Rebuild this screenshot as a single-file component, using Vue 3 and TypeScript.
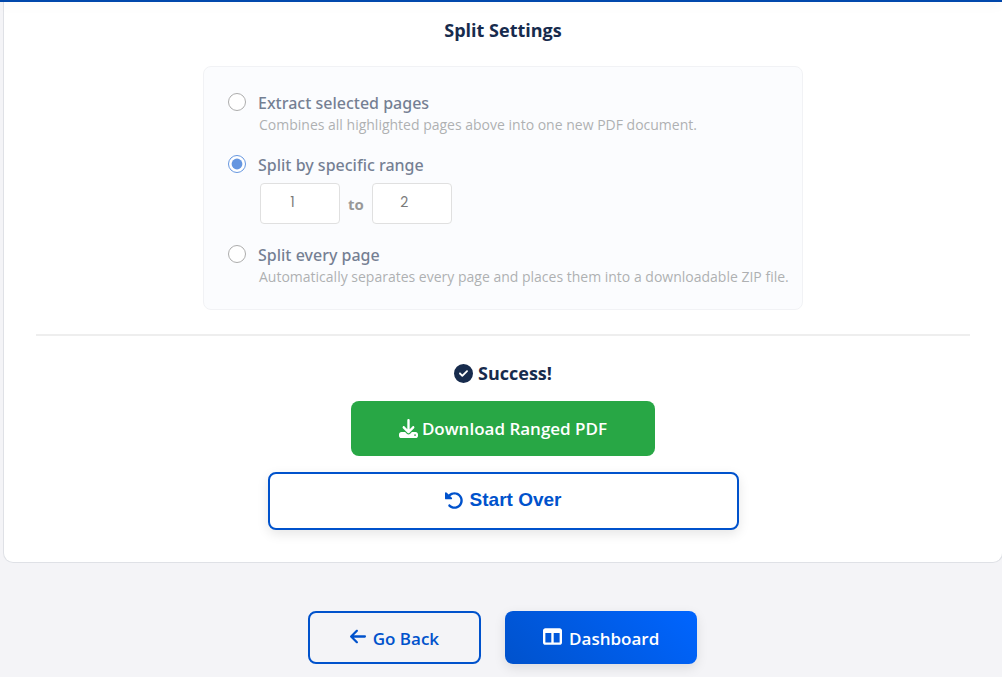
<script setup lang="ts">
import { ref } from 'vue'

type SplitMode = 'extract' | 'range' | 'every'

const mode = ref<SplitMode>('range')
const from = ref(1)
const to = ref(2)
</script>

<template>
  <div class="page">
    <header class="topbar"></header>
    <main class="card">
      <h3 class="title">Split Settings</h3>
      <form class="panel" @submit.prevent>
        <div class="option">
          <input id="mode-extract" v-model="mode" type="radio" name="mode" value="extract" />
          <div class="option-body">
            <label for="mode-extract">Extract selected pages</label>
            <p class="desc">Combines all highlighted pages above into one new PDF document.</p>
          </div>
        </div>
        <div class="option">
          <input id="mode-range" v-model="mode" type="radio" name="mode" value="range" />
          <div class="option-body">
            <label for="mode-range">Split by specific range</label>
            <div class="range">
              <input v-model="from" type="number" min="1" aria-label="From page" />
              <span class="to">to</span>
              <input v-model="to" type="number" min="1" aria-label="To page" />
            </div>
          </div>
        </div>
        <div class="option">
          <input id="mode-every" v-model="mode" type="radio" name="mode" value="every" />
          <div class="option-body">
            <label for="mode-every">Split every page</label>
            <p class="desc">Automatically separates every page and places them into a downloadable ZIP file.</p>
          </div>
        </div>
      </form>
      <section class="result">
        <h3 class="success">
          <svg class="icon" viewBox="0 0 512 512" aria-hidden="true"><path d="M256 512A256 256 0 1 0 256 0a256 256 0 1 0 0 512zM369 209L241 337c-9.4 9.4-24.6 9.4-33.9 0l-64-64c-9.4-9.4-9.4-24.6 0-33.9s24.6-9.4 33.9 0l47 47L335 175c9.4-9.4 24.6-9.4 33.9 0s9.4 24.6 0 33.9z" /></svg>
          Success!
        </h3>
        <a class="download" href="#">
          <svg class="icon" viewBox="0 0 512 512" aria-hidden="true"><path d="M288 32c0-17.7-14.3-32-32-32s-32 14.3-32 32V274.7l-73.4-73.4c-12.5-12.5-32.8-12.5-45.3 0s-12.5 32.8 0 45.3l128 128c12.5 12.5 32.8 12.5 45.3 0l128-128c12.5-12.5 12.5-32.8 0-45.3s-32.8-12.5-45.3 0L288 274.7V32zM64 352c-35.3 0-64 28.7-64 64v32c0 35.3 28.7 64 64 64H448c35.3 0 64-28.7 64-64V416c0-35.3-28.7-64-64-64H346.5l-45.3 45.3c-25 25-65.5 25-90.5 0L165.5 352H64zm368 56a24 24 0 1 1 0 48 24 24 0 1 1 0-48z" /></svg>
          Download Ranged PDF
        </a>
        <button class="restart" type="button">
          <svg class="icon" viewBox="0 0 512 512" aria-hidden="true"><path d="M24 32C10.700 32 0 42.700 0 56V200c0 13.300 10.700 24 24 24H168c9.700 0 18.500-5.800 22.200-14.800s1.700-19.300-5.200-26.200l-42-41c62.600-61.500 163.100-61.200 225.300 1c62.500 62.500 62.500 163.800 0 226.300s-163.800 62.500-226.300 0c-12.500-12.500-32.800-12.500-45.300 0s-12.500 32.800 0 45.300c87.500 87.500 229.300 87.500 316.800 0s87.500-229.300 0-316.800C326.400 10.700 185.300 10.300 97.600 96.800L48 47C41 38 34 32 24 32z" /></svg>
          Start Over
        </button>
      </section>
    </main>
    <nav class="links">
      <a class="link back" href="#">
        <svg class="icon arrow" viewBox="0 0 448 512" aria-hidden="true"><path d="M9.4 233.4c-12.5 12.5-12.5 32.8 0 45.3l160 160c12.5 12.5 32.8 12.5 45.3 0s12.5-32.8 0-45.3L109.2 288 416 288c17.7 0 32-14.3 32-32s-14.3-32-32-32l-306.7 0L214.6 118.6c12.5-12.5 12.5-32.8 0-45.3s-32.8-12.5-45.3 0l-160 160z" /></svg>
        <span>Go Back</span>
      </a>
      <a class="link dashboard" href="#">
        <svg class="icon" viewBox="0 0 512 512" aria-hidden="true"><path d="M0 96C0 60.7 28.7 32 64 32H448c35.3 0 64 28.7 64 64V416c0 35.3-28.7 64-64 64H64c-35.3 0-64-28.7-64-64V96zm64 64V416H224V160H64zm384 0H288V416H448V160z" /></svg>
        <span>Dashboard</span>
      </a>
    </nav>
  </div>
</template>

<style>
body {
  margin: 0;
  background: #f4f4f7;
}
</style>

<style scoped>
* {
  box-sizing: border-box;
}

.page {
  min-height: 100vh;
  overflow: hidden;
  font-family: 'Segoe UI', 'Open Sans', sans-serif;
  color: #172b4d;
  background: #f4f4f7;
}

.topbar {
  position: relative;
  height: 2px;
  background: #0047ab;
  box-shadow: 0 2px 12px rgba(0, 0, 0, 0.1);
}

.card {
  display: flex;
  flex-direction: column;
  align-items: center;
  margin: 0 -1px 0 3px;
  padding: 16px 32px 32px;
  background: #fff;
  border: 1px solid #dfe1e6;
  border-top: 0;
  border-radius: 0 0 10px 10px;
}

.title,
.success {
  margin: 0;
  font-size: 18px;
  font-weight: 700;
  line-height: 24px;
}

.panel {
  display: flex;
  flex-direction: column;
  gap: 19px;
  width: 600px;
  max-width: 100%;
  margin-top: 24px;
  padding: 24px 8px 23px 24px;
  background: #f9fbfe;
  border: 1px solid #e9ebef;
  border-radius: 8px;
  opacity: 0.6;
}

.option {
  display: flex;
  gap: 12px;
}

.option > input {
  flex: none;
  width: 18px;
  height: 18px;
  margin: 2px 0 0;
  accent-color: #0052cc;
}

.option-body label {
  display: block;
  font-family: 'Segoe UI', 'Noto Sans', sans-serif;
  font-size: 16px;
  font-weight: 500;
  line-height: 24px;
}

.desc {
  margin: 0;
  padding-left: 1px;
  color: #7a7d80;
  font-size: 14px;
  line-height: 19px;
}

.range {
  display: flex;
  align-items: center;
  gap: 8px;
  padding: 6px 0 0 2px;
}

.range input {
  width: 80px;
  height: 41px;
  padding: 7px 8px 9px;
  color: #222;
  font-family: Poppins, Lato, sans-serif;
  font-size: 14px;
  text-align: center;
  background: #fff;
  border: 1px solid #ccc;
  border-radius: 4px;
}

.to {
  color: #555;
  font-size: 15px;
  font-weight: 700;
}

.result {
  display: flex;
  flex-direction: column;
  align-items: center;
  align-self: stretch;
  margin-top: 24px;
  padding-top: 25px;
  border-top: 2px solid #eee;
}

.icon {
  flex: none;
  width: 19px;
  height: 19px;
  fill: currentColor;
}

.success {
  display: flex;
  align-items: center;
  gap: 5px;
}

.download {
  display: flex;
  align-items: center;
  gap: 4px;
  margin-top: 16px;
  padding: 0 48px;
  color: #fff;
  font-size: 17px;
  font-weight: 600;
  line-height: 55px;
  text-decoration: none;
  background: #28a745;
  border-radius: 8px;
}

.restart {
  display: flex;
  align-items: center;
  justify-content: center;
  gap: 6px;
  width: calc(50% + 4px);
  height: 58px;
  margin-top: 16px;
  padding: 0 0 2px;
  color: #0052cc;
  font-family: 'Liberation Sans', Arial, sans-serif;
  font-size: 19px;
  font-weight: 700;
  background: #fff;
  border: 2px solid #0052cc;
  border-radius: 8px;
  box-shadow: 0 4px 12px rgba(0, 0, 0, 0.1);
}

.links {
  display: flex;
  justify-content: center;
  gap: 24px;
  margin-left: 3px;
  padding: 48px 0 12px;
}

.link {
  display: flex;
  align-items: center;
  gap: 7px;
  height: 53px;
  padding: 2px 40px 0;
  font-size: 17px;
  font-weight: 600;
  text-decoration: none;
  border-radius: 8px;
}

.link .icon {
  margin-bottom: 4px;
}

.back {
  color: #0052cc;
  border: 2px solid #0052cc;
}

.link .arrow {
  width: 16px;
}

.dashboard {
  padding: 2px 38px 0;
  color: #fff;
  background: linear-gradient(45deg, #0052cc, #0065ff);
  box-shadow: 0 4px 12px rgba(0, 0, 0, 0.1);
}
</style>
